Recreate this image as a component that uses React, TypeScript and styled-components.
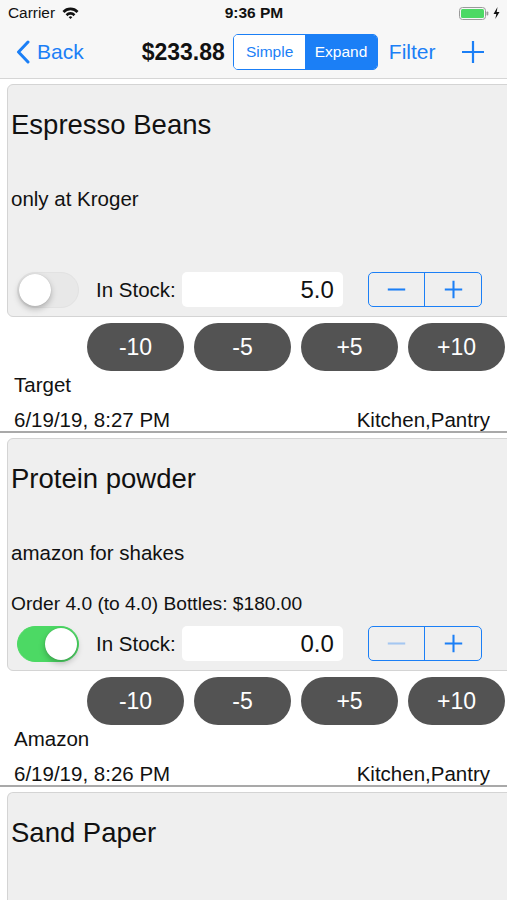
import React from "react";
import styled, { createGlobalStyle } from "styled-components";

const BLUE = "#1b7ff6";

const GlobalStyle = createGlobalStyle`
  html, body {
    margin: 0;
    padding: 0;
    background: #ffffff;
    font-family: "Liberation Sans", Arial, sans-serif;
    color: #111111;
    overflow: hidden;
  }
  * {
    box-sizing: border-box;
  }
`;

const Screen = styled.div`
  width: 507px;
  height: 900px;
  overflow: hidden;
  display: flex;
  flex-direction: column;
`;

const StatusBar = styled.div`
  flex-shrink: 0;
  height: 26px;
  background: #f7f7f7;
  display: grid;
  grid-template-columns: 1fr auto 1fr;
  align-items: center;
  padding: 0 7px 0 8px;
`;

const Carrier = styled.div`
  display: flex;
  align-items: center;
  gap: 7px;
  font-size: 15.4px;
`;

const Clock = styled.div`
  font-size: 15.5px;
  font-weight: 700;
`;

const BatteryWrap = styled.div`
  display: flex;
  justify-content: flex-end;
  align-items: center;
  gap: 4px;
`;

const NavBar = styled.div`
  flex-shrink: 0;
  height: 53px;
  background: #f7f7f7;
  border-bottom: 1px solid #d6d6d6;
  display: flex;
  align-items: center;
  padding: 0 0 0 16px;
`;

const NavLink = styled.button<{ $ml?: number }>`
  display: flex;
  align-items: center;
  gap: 7px;
  border: none;
  background: none;
  padding: 0;
  margin-left: ${(p) => p.$ml ?? 0}px;
  color: ${BLUE};
  font-family: inherit;
  font-size: 21px;
`;

const Total = styled.div`
  margin-left: 58px;
  font-size: 23px;
  font-weight: 700;
  color: #111111;
`;

const Segmented = styled.div`
  margin-left: 8px;
  display: flex;
  width: 145px;
  height: 36px;
  border: 1px solid ${BLUE};
  border-radius: 5px;
  overflow: hidden;
`;

const Segment = styled.div<{ $active?: boolean }>`
  flex: 1;
  display: flex;
  align-items: center;
  justify-content: center;
  font-size: 15.5px;
  color: ${(p) => (p.$active ? "#ffffff" : BLUE)};
  background: ${(p) => (p.$active ? BLUE : "#ffffff")};
`;

const List = styled.div`
  flex: 1;
  min-height: 0;
  display: flex;
  flex-direction: column;
  padding-top: 5px;
`;

const Item = styled.div`
  flex-shrink: 0;
  display: flex;
  flex-direction: column;
  border-bottom: 2px solid #a9a9a9;
  margin-bottom: 5px;
`;

const Card = styled.div<{ $peek?: boolean }>`
  flex: ${(p) => (p.$peek ? "1" : "0 0 233px")};
  margin-left: 7px;
  margin-right: -10px;
  height: ${(p) => (p.$peek ? "auto" : "233px")};
  background: #efefef;
  border: 1px solid #d4d4d4;
  border-bottom: ${(p) => (p.$peek ? "none" : "1px solid #d4d4d4")};
  border-radius: ${(p) => (p.$peek ? "6px 6px 0 0" : "6px")};
  display: flex;
  flex-direction: column;
  padding: 0 0 0 3px;
`;

const Title = styled.div`
  margin-top: 22px;
  height: 36px;
  line-height: 36px;
  font-size: 27.5px;
`;

const Note = styled.div`
  margin-top: 44px;
  height: 24px;
  line-height: 24px;
  font-size: 20.5px;
`;

const OrderLine = styled.div`
  margin-top: 28px;
  height: 22px;
  line-height: 22px;
  font-size: 19.2px;
`;

const Controls = styled.div`
  margin-top: 11px;
  height: 35px;
  display: flex;
  align-items: center;
  padding-left: 6px;
`;

const Switch = styled.div<{ $on?: boolean }>`
  position: relative;
  width: 62px;
  height: 36px;
  border-radius: 18px;
  background: ${(p) => (p.$on ? "#4cd964" : "#e8e8e8")};
  border: 1px solid ${(p) => (p.$on ? "#4cd964" : "#e2e2e2")};
`;

const Knob = styled.div<{ $on?: boolean }>`
  position: absolute;
  top: 1px;
  left: ${(p) => (p.$on ? "27px" : "1px")};
  width: 32px;
  height: 32px;
  border-radius: 50%;
  background: #ffffff;
  box-shadow: 0 3px 6px rgba(0, 0, 0, 0.25), 0 0 1px rgba(0, 0, 0, 0.2);
`;

const StockLabel = styled.div`
  margin-left: 17px;
  font-size: 20.5px;
`;

const StockField = styled.div`
  margin-left: 6px;
  width: 161px;
  height: 35px;
  background: #ffffff;
  border-radius: 5px;
  display: flex;
  align-items: center;
  justify-content: flex-end;
  padding-right: 9px;
  font-size: 24px;
`;

const Stepper = styled.div`
  margin-left: 25px;
  width: 114px;
  height: 35px;
  border: 1px solid ${BLUE};
  border-radius: 5px;
  display: flex;
`;

const StepHalf = styled.div<{ $divider?: boolean; $dim?: boolean }>`
  flex: 1;
  display: flex;
  align-items: center;
  justify-content: center;
  border-left: ${(p) => (p.$divider ? `1px solid ${BLUE}` : "none")};
  opacity: ${(p) => (p.$dim ? 0.35 : 1)};
`;

const Pills = styled.div`
  margin-top: 6px;
  display: flex;
  justify-content: flex-end;
  gap: 10px;
  padding-right: 2px;
`;

const Pill = styled.div`
  width: 97px;
  height: 48px;
  border-radius: 24px;
  background: #535353;
  color: #ffffff;
  display: flex;
  align-items: center;
  justify-content: center;
  font-size: 23px;
`;

const Store = styled.div`
  margin-top: 3px;
  padding-left: 14px;
  height: 22px;
  line-height: 22px;
  font-size: 20.5px;
`;

const MetaRow = styled.div`
  margin-top: 13px;
  padding: 0 17px 0 14px;
  height: 22px;
  line-height: 22px;
  display: flex;
  justify-content: space-between;
  font-size: 20.5px;
`;

const Wifi = () => (
  <svg width="17" height="12" viewBox="0 0 17 12">
    <path d="M0.5 4 A11 11 0 0 1 16.5 4 L14.6 6 A8.3 8.3 0 0 0 2.4 6 Z" fill="#111" />
    <path d="M3.6 7.2 A6.6 6.6 0 0 1 13.4 7.2 L11.5 9.2 A4 4 0 0 0 5.5 9.2 Z" fill="#111" />
    <path d="M6.7 10.3 A2.5 2.5 0 0 1 10.3 10.3 L8.5 12 Z" fill="#111" />
  </svg>
);

const Battery = () => (
  <svg width="30" height="13" viewBox="0 0 30 13">
    <rect x="0.5" y="0.5" width="26" height="12" rx="3" fill="none" stroke="#9a9a9a" />
    <rect x="2" y="2" width="23" height="9" rx="1.5" fill="#4cd964" />
    <rect x="27.5" y="4.5" width="1.8" height="4" rx="0.8" fill="#9a9a9a" />
  </svg>
);

const Bolt = () => (
  <svg width="7" height="12" viewBox="0 0 7 12">
    <path d="M4.5 0 L0.5 7 H3.3 L2.3 12 L6.5 5 H3.7 Z" fill="#111" />
  </svg>
);

const Chevron = () => (
  <svg width="14" height="24" viewBox="0 0 14 24">
    <path d="M12 2 L2.5 12 L12 22" fill="none" stroke={BLUE} strokeWidth="3" strokeLinecap="round" strokeLinejoin="round" />
  </svg>
);

const PlusIcon = ({ size, stroke }: { size: number; stroke: number }) => (
  <svg width={size} height={size} viewBox="0 0 24 24">
    <path d="M12 1 V23 M1 12 H23" stroke={BLUE} strokeWidth={stroke} fill="none" />
  </svg>
);

const MinusIcon = () => (
  <svg width="19" height="19" viewBox="0 0 24 24">
    <path d="M1 12 H23" stroke={BLUE} strokeWidth="2.6" fill="none" />
  </svg>
);

interface IItem {
  name: string;
  note: string;
  order: string;
  on: boolean;
  stock: string;
  store: string;
  date: string;
  places: string;
}

const items: IItem[] = [
  {
    name: "Espresso Beans",
    note: "only at Kroger",
    order: "",
    on: false,
    stock: "5.0",
    store: "Target",
    date: "6/19/19, 8:27 PM",
    places: "Kitchen,Pantry",
  },
  {
    name: "Protein powder",
    note: "amazon for shakes",
    order: "Order 4.0 (to 4.0) Bottles: $180.00",
    on: true,
    stock: "0.0",
    store: "Amazon",
    date: "6/19/19, 8:26 PM",
    places: "Kitchen,Pantry",
  },
];

function ItemRow({ item }: { item: IItem }) {
  return (
    <Item>
      <Card>
        <Title>{item.name}</Title>
        <Note>{item.note}</Note>
        <OrderLine>{item.order}</OrderLine>
        <Controls>
          <Switch $on={item.on}>
            <Knob $on={item.on} />
          </Switch>
          <StockLabel>In Stock:</StockLabel>
          <StockField>{item.stock}</StockField>
          <Stepper>
            <StepHalf $dim={item.stock === "0.0"}>
              <MinusIcon />
            </StepHalf>
            <StepHalf $divider>
              <PlusIcon size={19} stroke={2.6} />
            </StepHalf>
          </Stepper>
        </Controls>
      </Card>
      <Pills>
        {["-10", "-5", "+5", "+10"].map((v) => (
          <Pill key={v}>{v}</Pill>
        ))}
      </Pills>
      <Store>{item.store}</Store>
      <MetaRow>
        <span>{item.date}</span>
        <span>{item.places}</span>
      </MetaRow>
    </Item>
  );
}

export default function App() {
  return (
    <Screen>
      <GlobalStyle />
      <StatusBar>
        <Carrier>
          Carrier
          <Wifi />
        </Carrier>
        <Clock>9:36 PM</Clock>
        <BatteryWrap>
          <Battery />
          <Bolt />
        </BatteryWrap>
      </StatusBar>
      <NavBar>
        <NavLink>
          <Chevron />
          Back
        </NavLink>
        <Total>$233.88</Total>
        <Segmented>
          <Segment>Simple</Segment>
          <Segment $active>Expand</Segment>
        </Segmented>
        <NavLink $ml={11}>Filter</NavLink>
        <NavLink $ml={25}>
          <PlusIcon size={24} stroke={2.2} />
        </NavLink>
      </NavBar>
      <List>
        {items.map((item) => (
          <ItemRow key={item.name} item={item} />
        ))}
        <Card $peek>
          <Title>Sand Paper</Title>
        </Card>
      </List>
    </Screen>
  );
}
